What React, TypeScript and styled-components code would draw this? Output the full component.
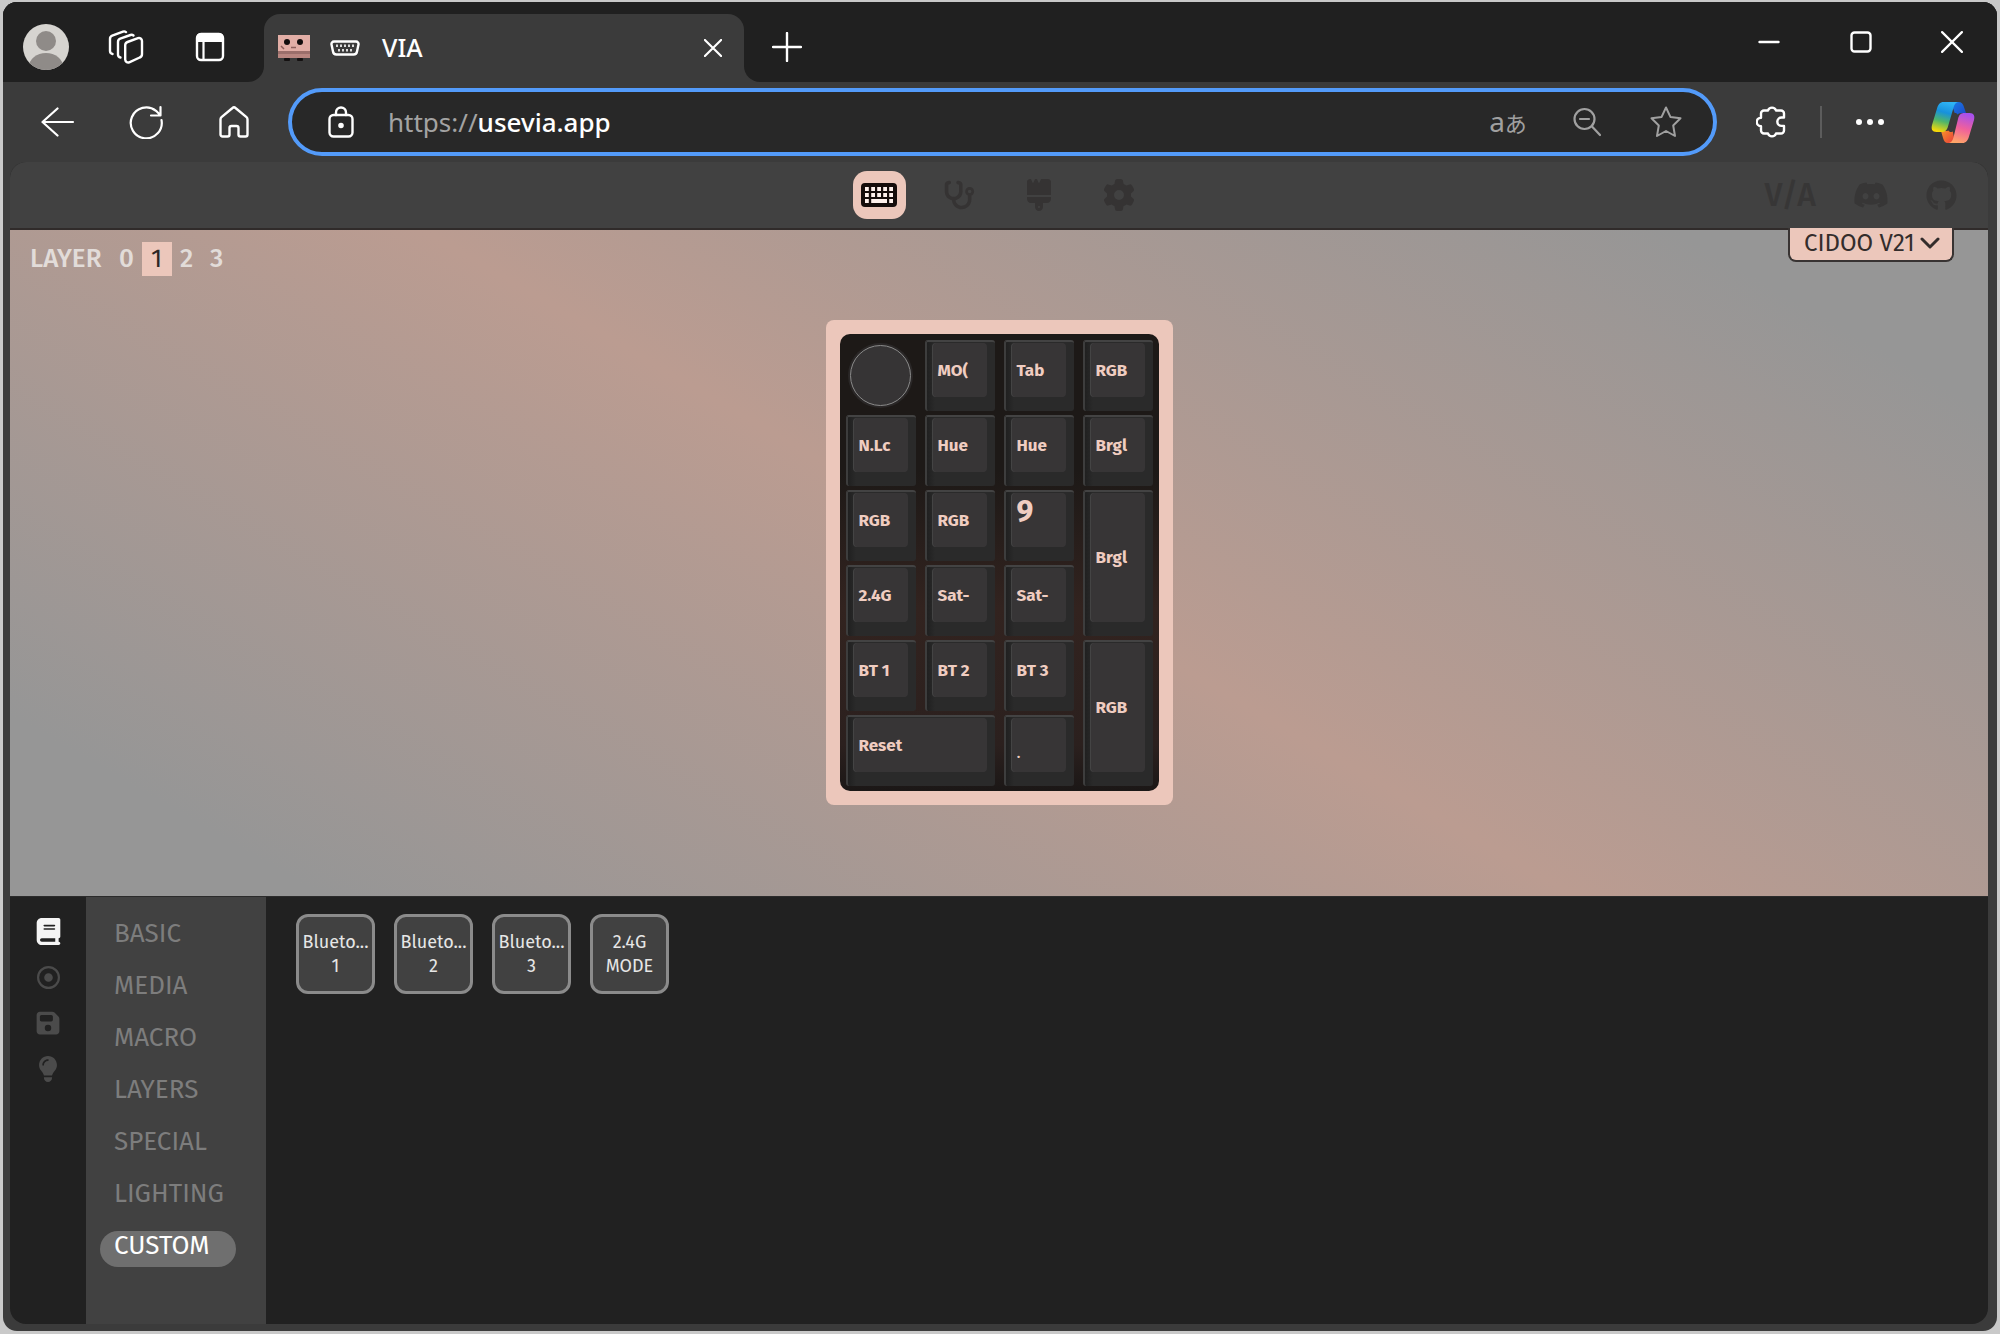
import React, { useState } from "react";
import styled, { createGlobalStyle, css } from "styled-components";
import { FaStethoscope, FaBrush, FaGear, FaDiscord, FaGithub, FaBook, FaRegCircleDot, FaFloppyDisk, FaLightbulb } from "react-icons/fa6";

const uiFont = '"Segoe UI", "Noto Sans", "Open Sans", sans-serif';
const appFont = '"Fira Sans", "Noto Sans", sans-serif';

const c = {
  titleBar: "#202020",
  chrome: "#3b3b3b",
  header: "#414141",
  panel: "#212121",
  accent: "#ecc7bb",
  dim: "#353333",
};

const GlobalStyle = createGlobalStyle`
  *, *::before, *::after { box-sizing: border-box; }
  body { margin: 0; background: #c9c9c9; font-family: ${uiFont}; }
  button, input, select { font: inherit; color: inherit; margin: 0; padding: 0; border: 0; background: none; outline: none; }
  svg { display: block; flex: none; }
`;

const Desktop = styled.div`
  display: flex;
  min-height: 100vh;
  padding: 2px 3px 3px;
`;

const Window = styled.div`
  flex: 1;
  min-width: 0;
  display: flex;
  flex-direction: column;
  overflow: hidden;
  border-radius: 14px;
  background: ${c.chrome};
  color: #fff;
`;

const TitleBar = styled.header`
  display: flex;
  height: 80px;
  background: linear-gradient(${c.titleBar} 50%, ${c.chrome} 50%);
`;

const TitleStart = styled.div`
  display: flex;
  align-items: center;
  gap: 36px;
  width: 261px;
  padding: 10px 0 0 20px;
  background: ${c.titleBar};
  border-bottom-right-radius: 16px;
`;

const TitleEnd = styled.div`
  flex: 1;
  display: flex;
  justify-content: space-between;
  padding: 0 0 0 16px;
  background: ${c.titleBar};
  border-bottom-left-radius: 16px;
`;

const IconButton = styled.button<{ $w?: number }>`
  display: flex;
  align-items: center;
  justify-content: center;
  width: ${(p) => p.$w ?? 48}px;
  height: 48px;
  cursor: pointer;
`;

const TitleButton = styled(IconButton)`
  margin-top: 21px;
`;

const WindowControls = styled.div`
  display: flex;
  align-items: center;
  height: 80px;
`;

const Tab = styled.div`
  display: flex;
  align-items: center;
  gap: 20px;
  width: 480px;
  margin-top: 12px;
  padding: 0 7px 0 14px;
  border-radius: 16px 16px 0 0;
  background: ${c.chrome};
`;

const TabTitle = styled.span`
  flex: 1;
  padding: 0 0 2px 2px;
  font-size: 25px;
  font-weight: 500;
  line-height: 32px;
`;

const Toolbar = styled.div`
  display: flex;
  align-items: center;
  height: 80px;
  padding: 0 9px 0 11px;
`;

const NavButtons = styled.div`
  display: flex;
  width: 274px;
`;

const AddressBar = styled.div`
  flex: 1;
  display: flex;
  align-items: center;
  height: 68px;
  padding: 0 23px 0 24px;
  border: 4px solid #539bfa;
  border-radius: 34px;
  background: #282828;
  font-size: 26px;
  line-height: 36px;
`;

const Scheme = styled.label`
  margin-left: 22px;
  color: #a3a3a3;
`;

const UrlInput = styled.input`
  flex: 1;
  min-width: 0;
  height: 36px;
  color: #fff;
  font-weight: 500;
`;

const AddressActions = styled.div`
  display: flex;
  gap: 31px;
  color: #a0a0a0;
`;

const Translate = styled.span`
  font-family: "Noto Sans", "Noto Sans CJK JP", sans-serif;
  font-size: 28px;
  line-height: 36px;
  small { font-size: 22px; }
`;

const ToolbarEnd = styled.div`
  display: flex;
  align-items: center;
  gap: 24px;
  margin-left: 31px;
`;

const Divider = styled.span`
  width: 2px;
  height: 32px;
  background: #5c5c5c;
`;

const Page = styled.main`
  flex: 1;
  display: flex;
  flex-direction: column;
  margin: 0 9px 7px 7px;
  overflow: hidden;
  border-radius: 16px;
  background: ${c.panel};
  font-family: ${appFont};
`;

const AppHeader = styled.div`
  display: grid;
  grid-template-columns: 1fr auto 1fr;
  align-items: center;
  height: 68px;
  padding: 0 31px;
  border-bottom: 2px solid #302b2a;
  background: ${c.header};
`;

const PaneTabs = styled.nav`
  grid-column: 2;
  display: flex;
  gap: 27px;
`;

const PaneButton = styled.button<{ $on?: boolean }>`
  display: flex;
  align-items: center;
  justify-content: center;
  width: 53px;
  height: 48px;
  border-radius: 14px;
  color: ${c.dim};
  cursor: pointer;
  ${(p) => p.$on && css`background: ${c.accent};`}
`;

const HeaderLinks = styled.div`
  justify-self: end;
  display: flex;
  align-items: center;
  gap: 37px;
`;

const HeaderLink = styled.a`
  color: #373636;
  font-size: 32px;
  font-weight: 500;
  line-height: 40px;
  text-decoration: none;
`;

const Stage = styled.section`
  flex: 14 1 0;
  display: grid;
  place-items: center;
  padding-bottom: 2px;
  background: linear-gradient(30deg, #969696 10%, #bb9c91 50%, #969696 90%);
  > * { grid-area: 1 / 1; }
`;

const Layers = styled.div`
  place-self: start;
  display: flex;
  align-items: center;
  padding: 12px 0 0 20px;
  color: #e2dcd9;
  font-size: 26px;
  font-weight: 500;
  line-height: 34px;
`;

const LayerLabel = styled.span`
  margin-right: 10px;
`;

const LayerButton = styled.button<{ $on: boolean }>`
  width: 30px;
  height: 34px;
  cursor: pointer;
  ${(p) => p.$on && css`background: ${c.accent}; color: #2c2626; font-weight: 400;`}
`;

const BoardPicker = styled.label`
  place-self: start end;
  display: flex;
  align-items: center;
  height: 34px;
  margin: -2px 34px 0 0;
  padding: 0 12px 3px 14px;
  border: 2px solid #383332;
  border-top: 0;
  border-radius: 0 0 8px 8px;
  background: ${c.accent};
  color: #332d2c;
`;

const BoardSelect = styled.select`
  appearance: none;
  width: 116px;
  font-size: 24px;
  line-height: 28px;
`;

const BoardCase = styled.div`
  padding: 14px;
  border-radius: 8px;
  background: ${c.accent};
`;

const Plate = styled.div`
  display: grid;
  grid-template-columns: repeat(4, 70px);
  grid-template-rows: repeat(6, 71px);
  gap: 4px 9px;
  padding: 6px 6px 5px;
  border-radius: 10px;
  background: linear-gradient(#1d1917 30%, #32231f 60%, #2b201e 90%, #1b1716);
`;

const Knob = styled.button`
  place-self: center;
  width: 61px;
  height: 61px;
  border: 1px solid #8a8a8a;
  border-radius: 50%;
  background: #363435;
  box-shadow: 0 0 0 2px #2a2727;
`;

const Cap = styled.button<{ $w?: number; $h?: number }>`
  grid-column: span ${(p) => p.$w ?? 1};
  grid-row: span ${(p) => p.$h ?? 1};
  display: flex;
  padding: 1px 8px 14px 6px;
  border-top: 2px solid #434343;
  border-left: 2px solid #3d3d3d;
  border-radius: 3px;
  background: linear-gradient(90deg, #202020, #2a2a2a 8px);
  cursor: pointer;
`;

const CapFace = styled.span<{ $top?: boolean }>`
  flex: 1;
  min-width: 0;
  display: flex;
  align-items: ${(p) => (p.$top ? "flex-start" : "center")};
  padding: 2px 8px 0 5px;
  border-radius: 4px;
  background: #373536;
  box-shadow: -1px 0 0 #444;
`;

const Legend = styled.span<{ $size: "small" | "large" | "dot" }>`
  white-space: nowrap;
  color: #f0cdc1;
  font-weight: 700;
  font-size: ${(p) => (p.$size === "large" ? 30 : 17)}px;
  line-height: ${(p) => (p.$size === "large" ? 34 : 24)}px;
  ${(p) => p.$size === "dot" && css`padding-top: 14px; font-weight: 400;`}
`;

const Configure = styled.section`
  flex: 9 1 0;
  display: flex;
  border-top: 1px solid #2b2b2b;
`;

const Rail = styled.nav`
  display: flex;
  flex-direction: column;
  align-items: center;
  gap: 16px;
  width: 76px;
  padding-top: 19px;
`;

const RailButton = styled.button<{ $on?: boolean }>`
  display: flex;
  align-items: center;
  justify-content: center;
  width: 30px;
  height: 30px;
  color: ${(p) => (p.$on ? "#f4f4f4" : "#4b4b4b")};
  cursor: pointer;
`;

const Menu = styled.nav`
  display: flex;
  flex-direction: column;
  align-items: flex-start;
  gap: 16px;
  width: 180px;
  padding: 22px 14px;
  background: ${c.header};
`;

const MenuItem = styled.button<{ $on: boolean }>`
  height: 36px;
  padding: 0 26px 6px 14px;
  border-radius: 18px;
  color: #7d7d7d;
  font-size: 26px;
  line-height: 30px;
  cursor: pointer;
  ${(p) => p.$on && css`background: #6f6f6f; color: #fff;`}
`;

const Keycodes = styled.div`
  flex: 1;
  display: flex;
  flex-wrap: wrap;
  align-content: flex-start;
  gap: 19px;
  padding: 17px 30px;
`;

const Keycode = styled.button`
  width: 79px;
  height: 80px;
  border: 3px solid #8b8b8b;
  border-radius: 12px;
  background: #414141;
  color: #e6e6e6;
  font-size: 18px;
  line-height: 24px;
  cursor: pointer;
  span { display: block; }
`;

const stroke = { fill: "none", stroke: "currentColor", strokeLinecap: "round", strokeLinejoin: "round" } as const;

const Avatar = () => (
  <svg width="46" height="46" viewBox="0 0 46 46">
    <defs><clipPath id="face"><circle cx="23" cy="23" r="23" /></clipPath></defs>
    <g clipPath="url(#face)">
      <rect width="46" height="46" fill="#d6d4d0" />
      <circle cx="23" cy="17" r="10" fill="#8f8b88" />
      <ellipse cx="23" cy="43" rx="17" ry="14" fill="#8f8b88" />
    </g>
  </svg>
);

const Workspaces = () => (
  <svg width="36" height="34" viewBox="0 0 36 34" {...stroke} strokeWidth="2.400">
    <path d="M19.500 12 30 8.200a3 3 0 0 1 4 2.800v13.200a3.500 3.500 0 0 1-2.300 3.300l-10.500 4.800a3 3 0 0 1-4-2.800V15.300a3.500 3.500 0 0 1 2.300-3.300Z" />
    <path d="M12.500 27.500a3 3 0 0 1-2.500-3V12A3.500 3.500 0 0 1 12.200 8.700L22.500 5a3 3 0 0 1 3 .5" />
    <path d="M4.500 24a3 3 0 0 1-2.500-3V9A3.500 3.500 0 0 1 4.200 5.700L15 1.600a3 3 0 0 1 3 .5" />
  </svg>
);

const TabActions = () => (
  <svg width="30" height="30" viewBox="0 0 30 30">
    <rect x="2" y="2" width="26" height="26" rx="4" {...stroke} strokeWidth="2.400" />
    <path d="M2 5a4 4 0 0 1 4-4h18a4 4 0 0 1 4 4v5H2Z" fill="currentColor" />
    <path d="M8.500 10v18" {...stroke} strokeWidth="2.200" />
  </svg>
);

const Favicon = () => (
  <svg width="32" height="26" viewBox="0 0 32 26">
    <rect width="32" height="16" fill="#e2aea6" />
    <rect y="16" width="32" height="3" fill="#9c6f6b" />
    <rect y="19" width="32" height="4" fill="#b98680" />
    <circle cx="9" cy="7" r="3" fill="#120d0d" />
    <circle cx="22" cy="7" r="3" fill="#120d0d" />
    <path d="M13 12.500h5M3 11l3 3" stroke="#8d5f5b" strokeWidth="1.500" />
    <rect x="6" y="23" width="6" height="3" rx="1" fill="#141111" />
    <rect x="19" y="23" width="6" height="3" rx="1" fill="#141111" />
  </svg>
);

const SerialPort = () => (
  <svg width="30" height="16" viewBox="0 0 30 16">
    <path d="M4 1.500h22a2.500 2.500 0 0 1 2.500 3l-1.500 7a3.500 3.500 0 0 1-3.500 3h-17a3.500 3.500 0 0 1-3.500-3l-1.500-7a2.500 2.500 0 0 1 2.500-3Z" {...stroke} strokeWidth="2.400" />
    {[7, 11, 15, 19, 23].map((x) => <rect key={x} x={x - 1} y="4.500" width="2" height="2.500" fill="#ddd" />)}
    {[9, 13, 17, 21].map((x) => <rect key={x} x={x - 1} y="9" width="2" height="2.500" fill="#ddd" />)}
  </svg>
);

const Cross = ({ size, weight }: { size: number; weight: number }) => (
  <svg width={size} height={size} viewBox="0 0 20 20" {...stroke} strokeWidth={weight}><path d="m1 1 18 18M19 1 1 19" /></svg>
);

const KeyboardIcon = () => (
  <svg width="36" height="24" viewBox="0 0 36 24">
    <rect width="36" height="24" rx="4" fill="#160d0b" />
    {[4, 10.200, 16.200, 22.200, 28.200].map((x) => (
      <g key={x} fill="#fff1ec"><rect x={x} y="4" width="3.800" height="4" /><rect x={x} y="10" width="3.800" height="4" /></g>
    ))}
    <g fill="#fff1ec"><rect x="4" y="16" width="3.800" height="4" /><rect x="10.200" y="16" width="15.800" height="4" /><rect x="28.200" y="16" width="3.800" height="4" /></g>
  </svg>
);

const CopilotLogo = () => (
  <svg width="44" height="43" viewBox="0 0 44 43">
    <defs>
      <linearGradient id="cpA" x1="0.600" y1="0" x2="0.350" y2="1">
        <stop offset="0" stopColor="#2fb4f5" /><stop offset=".35" stopColor="#1791dc" /><stop offset=".65" stopColor="#4fb56a" /><stop offset="1" stopColor="#f6d808" />
      </linearGradient>
      <linearGradient id="cpB" x1="0.600" y1="0" x2="0.350" y2="1">
        <stop offset="0" stopColor="#a650ee" /><stop offset=".5" stopColor="#f0609c" /><stop offset="1" stopColor="#ffa667" />
      </linearGradient>
      <linearGradient id="cpC" x1="0" y1="0" x2="1" y2="1"><stop offset="0" stopColor="#1a7fe8" /><stop offset="1" stopColor="#1c43c4" /></linearGradient>
      <linearGradient id="cpD" x1="0" y1="0" x2="1" y2="1"><stop offset="0" stopColor="#f7a127" /><stop offset="1" stopColor="#e8383c" /></linearGradient>
    </defs>
    <path d="M20 1h7.500c3 0 4.500 2 5.300 4.600L35 12h-4c-3.500 0-5 1.500-6 4Z" fill="url(#cpC)" />
    <path d="M24 42h-7c-3 0-4-2-4.800-4.500L10 30h5c3 0 5-1.500 6-4Z" fill="url(#cpD)" />
    <path d="M12.500 1H27c-2.500.500-3.500 2.500-4.300 5L17 25.500C16 29 14.500 31 10.500 31H5.500C1 31 0 28 1 24L6 7.500C7.200 3.500 9 1 12.500 1Z" fill="url(#cpA)" />
    <path d="M31.500 42H18c2.500-.500 3.500-2.500 4.300-5L27 18c1-4 2.500-6 6.500-6h5c4.500 0 5.500 3 4.500 7l-5 16.500C36.800 39.500 35 42 31.500 42Z" fill="url(#cpB)" />
    <path d="M24 14.500 20 28.500" fill="none" stroke={c.chrome} strokeWidth="5" strokeLinecap="round" />
  </svg>
);

type KeySpec = { label: string; w?: number; h?: number; size?: "large" | "dot" };
const KEYS: KeySpec[] = [
  { label: "MO(" }, { label: "Tab" }, { label: "RGB" },
  { label: "N.Lc" }, { label: "Hue" }, { label: "Hue" }, { label: "Brgl" },
  { label: "RGB" }, { label: "RGB" }, { label: "9", size: "large" }, { label: "Brgl", h: 2 },
  { label: "2.4G" }, { label: "Sat-" }, { label: "Sat-" },
  { label: "BT 1" }, { label: "BT 2" }, { label: "BT 3" }, { label: "RGB", h: 2 },
  { label: "Reset", w: 2 }, { label: ".", size: "dot" },
];

const MENU = ["BASIC", "MEDIA", "MACRO", "LAYERS", "SPECIAL", "LIGHTING", "CUSTOM"];
const CUSTOM_KEYCODES = [["Blueto...", "1"], ["Blueto...", "2"], ["Blueto...", "3"], ["2.4G", "MODE"]];

export default function App() {
  const [layer, setLayer] = useState(1);
  const [menu, setMenu] = useState("CUSTOM");

  return (
    <>
      <GlobalStyle />
      <Desktop>
        <Window>
          <TitleBar>
            <TitleStart>
              <IconButton $w={46} aria-label="Profile"><Avatar /></IconButton>
              <IconButton $w={42} aria-label="Workspaces"><Workspaces /></IconButton>
              <IconButton $w={54} aria-label="Tab actions"><TabActions /></IconButton>
            </TitleStart>
            <Tab>
              <Favicon />
              <SerialPort />
              <TabTitle>VIA</TabTitle>
              <IconButton aria-label="Close tab"><Cross size={18} weight={2.4} /></IconButton>
            </Tab>
            <TitleEnd>
              <TitleButton $w={54} aria-label="New tab">
                <svg width="30" height="30" viewBox="0 0 30 30" {...stroke} strokeWidth="2.400"><path d="M15 1v28M1 15h28" /></svg>
              </TitleButton>
              <WindowControls>
                <IconButton $w={92} aria-label="Minimize">
                  <svg width="22" height="4" viewBox="0 0 22 4" {...stroke} strokeWidth="2.400"><path d="M1.500 2h19" /></svg>
                </IconButton>
                <IconButton $w={92} aria-label="Maximize">
                  <svg width="22" height="22" viewBox="0 0 22 22" {...stroke} strokeWidth="2.400"><rect x="1.500" y="1.500" width="19" height="19" rx="3" /></svg>
                </IconButton>
                <IconButton $w={90} aria-label="Close"><Cross size={22} weight={2} /></IconButton>
              </WindowControls>
            </TitleEnd>
          </TitleBar>

          <Toolbar>
            <NavButtons>
              <IconButton $w={88} aria-label="Back">
                <svg width="34" height="30" viewBox="0 0 34 30" {...stroke} strokeWidth="2.200"><path d="M32 15H1.500M16.500 1.500 1.500 15l15 13.500" /></svg>
              </IconButton>
              <IconButton $w={88} aria-label="Refresh">
                <svg width="34" height="34" viewBox="0 0 34 34" {...stroke} strokeWidth="2.200"><path d="M32.500 15A15.500 15.500 0 1 1 27 5.800l4 4M31.500 2v8.500H22" /></svg>
              </IconButton>
              <IconButton $w={88} aria-label="Home">
                <svg width="30" height="32" viewBox="0 0 30 32" {...stroke} strokeWidth="2.400"><path d="M1.500 13.500a3 3 0 0 1 1-2.300L13.500 2a2.200 2.200 0 0 1 3 0l11 9.200a3 3 0 0 1 1 2.300V28.500a2 2 0 0 1-2 2H21.500a2 2 0 0 1-2-2V22a2 2 0 0 0-2-2h-5a2 2 0 0 0-2 2v6.500a2 2 0 0 1-2 2H3.500a2 2 0 0 1-2-2Z" /></svg>
              </IconButton>
            </NavButtons>
            <AddressBar>
              <IconButton $w={50} aria-label="Site information">
                <svg width="26" height="32" viewBox="0 0 26 32" {...stroke} strokeWidth="2.400"><rect x="1.500" y="9" width="23" height="21.500" rx="4" /><path d="M8 9V6.500a5 5 0 0 1 10 0V9" /><circle cx="13" cy="19.500" r="1.600" fill="currentColor" /></svg>
              </IconButton>
              <Scheme htmlFor="url">https://</Scheme>
              <UrlInput id="url" defaultValue="usevia.app" />
              <AddressActions>
                <IconButton aria-label="Translate"><Translate>a<small>あ</small></Translate></IconButton>
                <IconButton aria-label="Zoom out">
                  <svg width="28" height="30" viewBox="0 0 28 30" {...stroke} strokeWidth="2.200"><circle cx="11.500" cy="12" r="10" /><path d="m19 19.500 8 8.500M7 12h9" /></svg>
                </IconButton>
                <IconButton aria-label="Add to favorites">
                  <svg width="32" height="32" viewBox="0 0 32 32" {...stroke} strokeWidth="2"><path d="m16 1.500 4.400 9.400 10.100 1.400-7.300 7.200 1.800 10.500-9-5-9 5 1.800-10.500-7.300-7.200 10.100-1.400Z" /></svg>
                </IconButton>
              </AddressActions>
            </AddressBar>
            <ToolbarEnd>
              <IconButton aria-label="Extensions">
                <svg width="32" height="34" viewBox="0 0 32 34" {...stroke} strokeWidth="2.400"><path d="M8 5.500h4a4.200 4.200 0 0 1 8 0h5a3 3 0 0 1 3 3v4h-2.500a4.200 4.200 0 0 0 0 8.400H28v4.600a3 3 0 0 1-3 3h-5a4.200 4.200 0 0 1-8 0H8a3 3 0 0 1-3-3v-4.300a4.200 4.200 0 0 1 0-8.500V8.500a3 3 0 0 1 3-3Z" /></svg>
              </IconButton>
              <Divider />
              <IconButton aria-label="Settings and more">
                <svg width="28" height="6" viewBox="0 0 28 6" fill="currentColor"><circle cx="3" cy="3" r="3" /><circle cx="14" cy="3" r="3" /><circle cx="25" cy="3" r="3" /></svg>
              </IconButton>
              <IconButton $w={70} aria-label="Copilot"><CopilotLogo /></IconButton>
            </ToolbarEnd>
          </Toolbar>

          <Page>
            <AppHeader>
              <PaneTabs>
                <PaneButton $on aria-label="Configure"><KeyboardIcon /></PaneButton>
                <PaneButton aria-label="Key tester"><FaStethoscope size={32} /></PaneButton>
                <PaneButton aria-label="Design"><FaBrush size={32} /></PaneButton>
                <PaneButton aria-label="Settings"><FaGear size={32} /></PaneButton>
              </PaneTabs>
              <HeaderLinks>
                <HeaderLink href="#via">V/A</HeaderLink>
                <HeaderLink href="#discord" aria-label="Discord"><FaDiscord size={36} /></HeaderLink>
                <HeaderLink href="#github" aria-label="GitHub"><FaGithub size={31} /></HeaderLink>
              </HeaderLinks>
            </AppHeader>

            <Stage>
              <Layers>
                <LayerLabel>LAYER</LayerLabel>
                {[0, 1, 2, 3].map((n) => (
                  <LayerButton key={n} $on={n === layer} onClick={() => setLayer(n)}>{n}</LayerButton>
                ))}
              </Layers>
              <BoardPicker>
                <BoardSelect aria-label="Keyboard"><option>CIDOO V21</option></BoardSelect>
                <svg width="20" height="12" viewBox="0 0 20 12" {...stroke} strokeWidth="3"><path d="m2 2 8 8 8-8" /></svg>
              </BoardPicker>
              <BoardCase>
                <Plate>
                  <Knob aria-label="Encoder" />
                  {KEYS.map((k, i) => (
                    <Cap key={i} $w={k.w} $h={k.h}>
                      <CapFace $top={k.size === "large"}>
                        <Legend $size={k.size ?? "small"}>{k.label}</Legend>
                      </CapFace>
                    </Cap>
                  ))}
                </Plate>
              </BoardCase>
            </Stage>

            <Configure>
              <Rail>
                <RailButton $on aria-label="Keymap"><FaBook size={27} /></RailButton>
                <RailButton aria-label="Macros"><FaRegCircleDot size={23} /></RailButton>
                <RailButton aria-label="Save and load"><FaFloppyDisk size={26} /></RailButton>
                <RailButton aria-label="Lighting"><FaLightbulb size={26} /></RailButton>
              </Rail>
              <Menu>
                {MENU.map((m) => (
                  <MenuItem key={m} $on={m === menu} onClick={() => setMenu(m)}>{m}</MenuItem>
                ))}
              </Menu>
              <Keycodes>
                {CUSTOM_KEYCODES.map(([a, b]) => (
                  <Keycode key={a + b}><span>{a}</span><span>{b}</span></Keycode>
                ))}
              </Keycodes>
            </Configure>
          </Page>
        </Window>
      </Desktop>
    </>
  );
}
